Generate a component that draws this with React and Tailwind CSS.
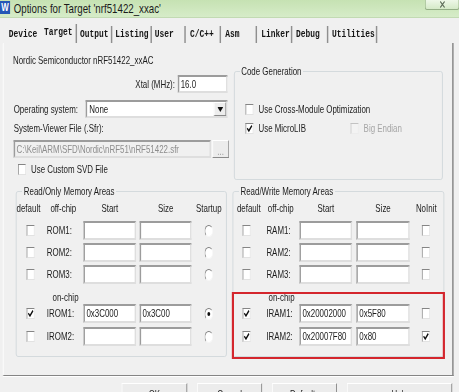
import React from 'react';

// The original capture is squeezed horizontally, so the dialog is laid out
// at normal width and narrowed with one scale-x on the root.

const tabs = [
  { name: 'Device', w: 'w-[50px]', pl: 'pl-[6px]', sep: false },
  { name: 'Target', w: 'w-[51px]', pl: 'pl-[5px]', sep: true, active: true },
  { name: 'Output', w: 'w-[49px]', pl: 'pl-[4px]', sep: true },
  { name: 'Listing', w: 'w-[55px]', pl: 'pl-[4px]', sep: true },
  { name: 'User', w: 'w-[47px]', pl: 'pl-[4px]', sep: true },
  { name: 'C/C++', w: 'w-[49px]', pl: 'pl-[6px]', sep: true },
  { name: 'Asm', w: 'w-[50px]', pl: 'pl-[6px]', sep: true },
  { name: 'Linker', w: 'w-[49px]', pl: 'pl-[6px]', sep: true },
  { name: 'Debug', w: 'w-[50px]', pl: 'pl-[5px]', sep: true },
  { name: 'Utilities', w: 'w-[68px]', pl: 'pl-[5px]', sep: true },
];

const CheckBox = ({ checked, disabled }) => (
  <span
    className={
      disabled
        ? 'w-[11px] h-[11px] shrink-0 border border-t-[#c2c2c2] border-l-[#c2c2c2] border-r-[#ececec] border-b-[#ececec] bg-[#f3f3f3]'
        : 'w-[11px] h-[11px] shrink-0 border border-t-[#858585] border-l-[#858585] border-r-[#e2e2e2] border-b-[#e2e2e2] bg-white flex items-center justify-center'
    }
  >
    {checked && (
      <svg width="9" height="9" viewBox="0 0 9 9">
        <path d="M1.3 4.2 L3.6 6.9 L7.8 1.6" fill="none" stroke="#111" strokeWidth="1.7" />
      </svg>
    )}
  </span>
);

const Radio = ({ checked }) => (
  <span className="w-[12px] h-[12px] rounded-full border-[1.5px] border-t-[#7d7d7d] border-l-[#7d7d7d] border-r-[#f6f6f6] border-b-[#f6f6f6] bg-white flex items-center justify-center">
    {checked && <span className="w-[4px] h-[4px] rounded-full bg-[#111]" />}
  </span>
);

const Field = ({ className = '', children, disabled }) => (
  <div
    className={`${className} border-2 border-t-[#9c9c9c] border-l-[#9c9c9c] border-r-[#dedede] border-b-[#dedede] pl-[2px] leading-[14px] whitespace-nowrap overflow-hidden ${
      disabled ? 'bg-[#f0f0f0] text-[#8d8d8d]' : 'bg-white'
    }`}
  >
    {children}
  </div>
);

const Button = ({ className = '', children }) => (
  <div className={`${className} h-[23px] flex items-center justify-center border border-t-white border-l-white border-r-[#6e6e6e] border-b-[#6e6e6e] bg-[#ececec]`}>
    {children}
  </div>
);

const RoRow = ({ label, start, size, checked, startup, className = '' }) => (
  <div className={`${className} h-[19px] flex items-center`}>
    <div className="w-[42px] pl-[14px]">
      <CheckBox checked={checked} />
    </div>
    <div className="w-[51px]">{label}</div>
    <Field className="w-[73px] h-[19px]">{start}</Field>
    <Field className="ml-[5px] w-[72px] h-[19px]">{size}</Field>
    <div className="w-[48px] flex justify-center">
      <Radio checked={startup} />
    </div>
  </div>
);

const RwRow = ({ label, start, size, checked, noInit, className = '' }) => (
  <div className={`${className} h-[19px] flex items-center`}>
    <div className="w-[46px] pl-[13px]">
      <CheckBox checked={checked} />
    </div>
    <div className="w-[46px]">{label}</div>
    <Field className="w-[73px] h-[19px]">{start}</Field>
    <Field className="ml-[6px] w-[74px] h-[19px]">{size}</Field>
    <div className="w-[46px] pl-[17px]">
      <CheckBox checked={noInit} />
    </div>
  </div>
);

export default function App() {
  return (
    <div className="w-[459px] h-[392px] overflow-hidden bg-[#f0f0f0]">
      <div className="w-[638px] h-[392px] origin-top-left scale-x-[0.72] flex flex-col text-[11px] text-[#1c1c1c] font-['Liberation_Sans',Arial,sans-serif]">
        {/* Title bar */}
        <div className="h-[18px] shrink-0 flex bg-linear-to-b from-[#c6e2b3] to-[#d6ecc8] border-b border-b-[#c2dab3]">
          <div className="w-[14px] h-[13px] mt-[1px] bg-[#2457b6] text-white text-[11px] font-bold leading-[13px] text-center">
            W
          </div>
          <div className="ml-[5px] text-[13.5px] leading-[17px] text-[#1b1b1b]">
            Options for Target 'nrf51422_xxac'
          </div>
          <div className="ml-auto w-[48px] h-[10px] rounded-b-[3px] border border-t-0 border-[#94ae86] bg-linear-to-b from-[#eef7e8] to-[#d5eac8] flex items-center justify-center">
            <svg width="9" height="7" viewBox="0 0 9 7">
              <path d="M1.5 0.5 L7.5 6.5 M7.5 0.5 L1.5 6.5" stroke="#5d6b58" strokeWidth="1.3" />
            </svg>
          </div>
        </div>

        {/* Tabs */}
        <div className="h-[25px] shrink-0 flex items-end pl-[6px] font-['Liberation_Mono','DejaVu_Sans_Mono',monospace] font-bold text-[11px] text-[#151515]">
          {tabs.map(tab => (
            <div
              key={tab.name}
              className={`${tab.w} ${tab.pl} ${tab.active ? 'h-[19px]' : 'h-[17px]'} leading-[16px] ${
                tab.sep ? 'border-r-2 border-r-[#8f8f8f]' : ''
              }`}
            >
              {tab.name}
            </div>
          ))}
        </div>

        {/* Tab page */}
        <div className="relative shrink-0 ml-[4px] w-[626px] h-[333px] border-l border-l-white border-r-2 border-r-[#858585] border-b border-b-[#858585] shadow-[0_1px_0_#ffffff]">
          <div className="flex h-[137px]">
            <div className="ml-[13px] w-[300px] flex flex-col">
              <div className="mt-[10px] h-[14px] leading-[14px]">Nordic Semiconductor nRF51422_xxAC</div>
              <div className="mt-[8px] h-[18px] flex items-center justify-end pr-[2px]">
                <span className="mr-[4px]">Xtal (MHz):</span>
                <Field className="w-[69px] h-[18px]">16.0</Field>
              </div>
              <div className="mt-[7px] h-[18px] flex items-center">
                <span className="w-[101px] pl-[1px]">Operating system:</span>
                <div className="w-[197px] h-[18px] flex border-2 border-t-[#9c9c9c] border-l-[#9c9c9c] border-r-[#dedede] border-b-[#dedede] bg-white">
                  <span className="flex-1 pl-[3px] leading-[14px]">None</span>
                  <span className="w-[17px] h-[14px] flex items-center justify-center bg-[#ededed] border border-t-white border-l-white border-r-[#8a8a8a] border-b-[#8a8a8a]">
                    <svg width="8" height="5" viewBox="0 0 8 5">
                      <path d="M0 0 H8 L4 5 Z" fill="#111" />
                    </svg>
                  </span>
                </div>
              </div>
              <div className="mt-[3px] h-[14px] leading-[14px] pl-[1px]">System-Viewer File (.Sfr):</div>
              <div className="mt-[5px] h-[18px] flex pl-[1px]">
                <Field disabled className="w-[274px] h-[18px]">
                  {'C:\\Keil\\ARM\\SFD\\Nordic\\nRF51\\nRF51422.sfr'}
                </Field>
                <div className="ml-[2px] w-[23px] h-[18px] flex items-end justify-center border border-t-white border-l-white border-r-[#8a8a8a] border-b-[#8a8a8a] bg-[#ececec] text-[#9a9a9a] leading-[12px]">
                  ...
                </div>
              </div>
              <div className="mt-[4px] h-[14px] flex items-center pl-[7px]">
                <CheckBox />
                <span className="ml-[7px]">Use Custom SVD File</span>
              </div>
            </div>

            {/* Code Generation */}
            <fieldset className="ml-[7px] mt-[21px] w-[290px] h-[116px] border border-[#cfd6da] rounded-[3px]">
              <legend className="ml-[7px] px-[2px] leading-[14px]">Code Generation</legend>
              <div className="mt-[24px] ml-[15px] h-[14px] flex items-center">
                <CheckBox />
                <span className="ml-[7px]">Use Cross-Module Optimization</span>
              </div>
              <div className="mt-[5px] ml-[15px] h-[14px] flex items-center">
                <CheckBox checked />
                <span className="ml-[7px] w-[128px]">Use MicroLIB</span>
                <CheckBox disabled />
                <span className="ml-[7px] text-[#a6a6a6]">Big Endian</span>
              </div>
            </fieldset>
          </div>

          <div className="flex mt-[4px]">
            {/* Read/Only Memory Areas */}
            <fieldset className="ml-[17px] w-[293px] h-[173px] border border-[#cfd6da] rounded-[3px]">
              <legend className="ml-[8px] px-[2px] leading-[14px]">Read/Only Memory Areas</legend>
              <div className="mt-[3px] h-[14px] flex leading-[14px]">
                <div className="w-[42px]">default</div>
                <div className="w-[51px] pl-[5px]">off-chip</div>
                <div className="w-[73px] text-center">Start</div>
                <div className="ml-[5px] w-[72px] text-center">Size</div>
                <div className="w-[48px] text-center">Startup</div>
              </div>
              <RoRow className="mt-[6px]" label="ROM1:" />
              <RoRow className="mt-[3px]" label="ROM2:" />
              <RoRow className="mt-[3px]" label="ROM3:" />
              <div className="mt-[6px] h-[14px] leading-[14px] pl-[50px]">on-chip</div>
              <RoRow label="IROM1:" start="0x3C000" size="0x3C00" checked startup />
              <RoRow className="mt-[4px]" label="IROM2:" />
            </fieldset>

            {/* Read/Write Memory Areas */}
            <fieldset className="ml-[8px] w-[294px] h-[173px] border border-[#cfd6da] rounded-[3px]">
              <legend className="ml-[8px] px-[2px] leading-[14px]">Read/Write Memory Areas</legend>
              <div className="mt-[3px] h-[14px] flex leading-[14px]">
                <div className="w-[46px] pl-[5px]">default</div>
                <div className="w-[46px] pl-[2px]">off-chip</div>
                <div className="w-[73px] text-center">Start</div>
                <div className="ml-[6px] w-[74px] text-center">Size</div>
                <div className="w-[46px] text-center">NoInit</div>
              </div>
              <RwRow className="mt-[6px]" label="RAM1:" />
              <RwRow className="mt-[3px]" label="RAM2:" />
              <RwRow className="mt-[3px]" label="RAM3:" />
              <div className="mt-[6px] h-[14px] leading-[14px] pl-[49px]">on-chip</div>
              <RwRow label="IRAM1:" start="0x20002000" size="0x5F80" checked />
              <RwRow className="mt-[4px]" label="IRAM2:" start="0x20007F80" size="0x80" checked noInit />
            </fieldset>
          </div>

          {/* red highlight drawn over the on-chip RAM rows */}
          <div className="absolute left-[317px] top-[249px] w-[296px] h-[67px] border-x-[3px] border-y-2 border-[#d4262d]" />
        </div>

        {/* Dialog buttons */}
        <div className="mt-[7px] flex">
          <Button className="ml-[169px] w-[91px]">OK</Button>
          <Button className="ml-[14px] w-[90px]">Cancel</Button>
          <Button className="ml-[14px] w-[90px]">Defaults</Button>
          <Button className="ml-[14px] w-[146px]">Help</Button>
        </div>
      </div>
    </div>
  );
}
